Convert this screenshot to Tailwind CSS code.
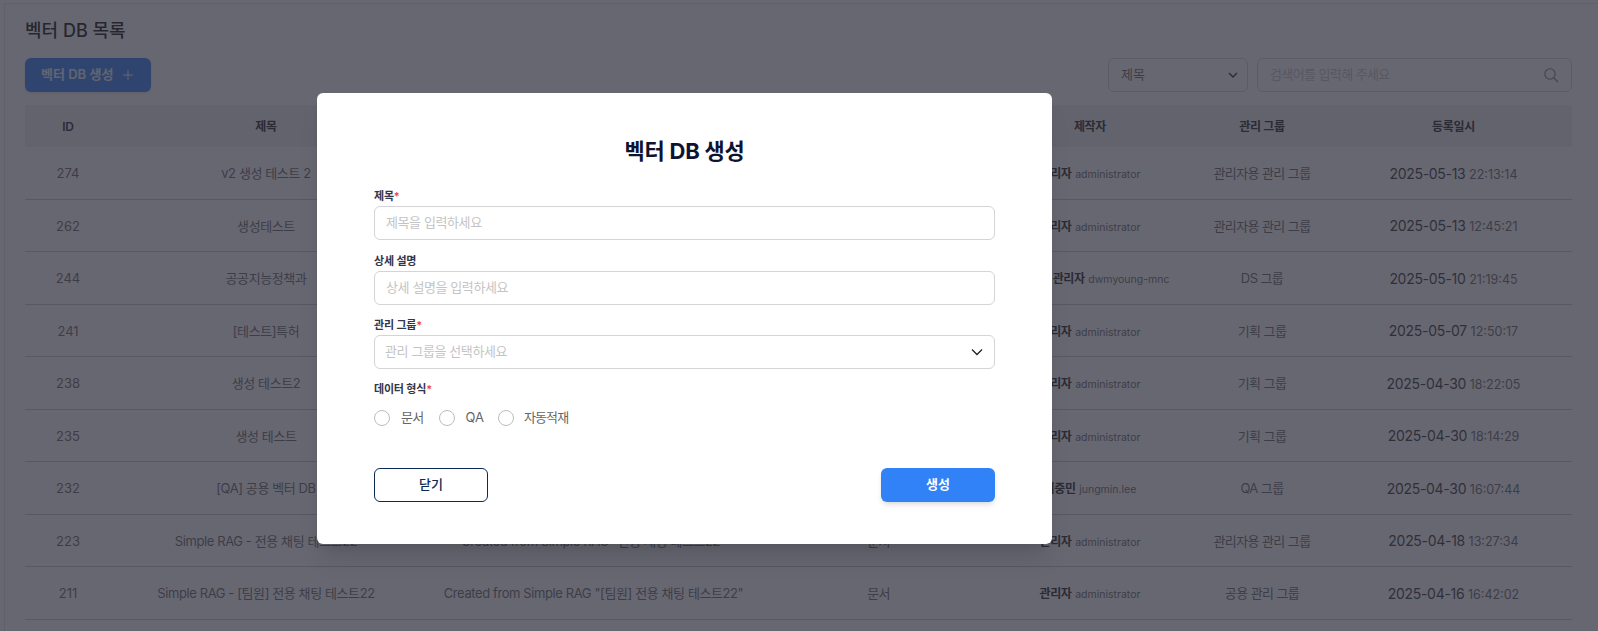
<!DOCTYPE html>
<html lang="ko">
<head>
  <meta charset="UTF-8" />
  <meta name="viewport" content="width=device-width, initial-scale=1.0" />
  <title>벡터 DB 목록</title>
  <script src="https://cdn.jsdelivr.net/npm/@tailwindcss/browser@4"></script>
</head>
<body class="bg-white text-[#1a1a2e] font-['Inter','Noto_Sans_CJK_KR',sans-serif] h-[631px] overflow-hidden">
  <div class="relative h-[631px] overflow-hidden">
    <!-- page behind the dialog -->
    <main class="ml-[4px] mt-[3px] h-[628px] border-l border-t border-[#e4e4ea] pl-[20px] pr-[26px] pt-[14px]">
      <h1 class="text-[18px] leading-[26px] font-medium text-[#111]">벡터 DB 목록</h1>

      <div class="flex items-center justify-between mt-[14px] h-[34px]">
        <button class="flex items-center gap-[9px] h-[34px] w-[126px] pl-4 rounded-md bg-[#3182f6] text-white/90 text-[13px] font-semibold shadow">
          벡터 DB 생성
          <svg class="w-[12px] h-[12px]" viewBox="0 0 12 12" fill="none" stroke="currentColor" stroke-width="1"><path d="M6 1v10M1 6h10" /></svg>
        </button>
        <div class="flex gap-[9px]">
          <div class="flex items-center justify-between w-[140px] h-[34px] pl-3 pr-[8px] border border-[#d4d4d8] rounded-md text-[13px] text-[#666]">
            제목
            <svg class="w-[12px] h-[12px] text-[#222]" viewBox="0 0 12 12" fill="none" stroke="currentColor" stroke-width="1.4"><path d="M2 4l4 4 4-4" /></svg>
          </div>
          <div class="flex items-center justify-between w-[315px] h-[34px] pl-3 pr-[12px] border border-[#d4d4d8] rounded-md text-[13px] tracking-[-0.6px] text-[#c4c4c4]">
            검색어를 입력해 주세요
            <svg class="w-[16px] h-[16px] text-[#777]" viewBox="0 0 16 16" fill="none" stroke="currentColor" stroke-width="1.1"><circle cx="7" cy="7" r="5.2" /><path d="M11 11l4 4" /></svg>
          </div>
        </div>
      </div>

      <div id="table" class="mt-[13px] w-[1547px]">
        <div class="grid grid-cols-[86px_310px_345px_225px_198px_146px_237px] items-center h-[42px] pt-[1px] bg-[#efeff1] text-[12px] tracking-[-0.3px] font-semibold text-[#222] text-center">
          <div>ID</div><div>제목</div><div>설명</div><div>데이터 형식</div><div>제작자</div><div>관리 그룹</div><div>등록일시</div>
        </div>
      </div>
    </main>

    <!-- overlay + dialog -->
    <div class="absolute inset-0 bg-[#2f2e3d]/73 pl-[317px] pt-[93px]">
      <div class="w-[735px] h-[451px] bg-white rounded-md shadow-xl px-[57px] pt-[42px]">
        <h2 class="text-[22px] leading-[32px] font-bold tracking-[-0.2px] text-center text-[#0f1332]">벡터 DB 생성</h2>

        <label class="block mt-[21px] text-[11px] leading-[16px] font-semibold tracking-[-0.2px] text-[#33364a]">제목<span class="text-[#f04452]">*</span></label>
        <div class="flex items-center h-[34px] mt-[2px] pl-[11px] border border-[#d4d4d8] rounded-md text-[13px] tracking-[-0.4px] text-[#c4c4c4]">제목을 입력하세요</div>

        <label class="block mt-[12.5px] text-[11px] leading-[16px] font-semibold tracking-[-0.2px] text-[#33364a]">상세 설명</label>
        <div class="flex items-center h-[34px] mt-[2px] pl-[11px] border border-[#d4d4d8] rounded-md text-[13px] tracking-[-0.4px] text-[#c4c4c4]">상세 설명을 입력하세요</div>

        <label class="block mt-[12.5px] text-[11px] leading-[16px] font-semibold tracking-[-0.2px] text-[#33364a]">관리 그룹<span class="text-[#f04452]">*</span></label>
        <div class="flex items-center justify-between h-[34px] mt-[2px] px-[10px] border border-[#d4d4d8] rounded-md text-[13px] tracking-[-0.4px] text-[#c4c4c4]">
          관리 그룹을 선택하세요
          <svg class="w-[14px] h-[14px] text-[#222]" viewBox="0 0 14 14" fill="none" stroke="currentColor" stroke-width="1.3"><path d="M2 4.5l5 5 5-5" /></svg>
        </div>

        <label class="block mt-[12px] text-[11px] leading-[16px] font-semibold tracking-[-0.2px] text-[#33364a]">데이터 형식<span class="text-[#f04452]">*</span></label>
        <div class="flex items-center mt-[11px] h-[20px] text-[13px] text-[#666]">
          <span class="w-[16px] h-[16px] rounded-full border border-[#bdbdbd]"></span><span class="ml-[11px] tracking-[-0.7px]">문서</span>
          <span class="ml-[15px] w-[16px] h-[16px] rounded-full border border-[#bdbdbd]"></span><span class="ml-[11px]">QA</span>
          <span class="ml-[14px] w-[16px] h-[16px] rounded-full border border-[#bdbdbd]"></span><span class="ml-[10px] tracking-[-0.9px]">자동적재</span>
        </div>

        <div class="flex justify-between mt-[39.5px]">
          <button class="w-[114px] h-[34px] rounded-md border border-[#0b2a55] bg-white text-[13px] font-medium text-[#0b2a55]">닫기</button>
          <button class="w-[114px] h-[34px] rounded-md bg-[#3182f6] text-[13px] font-semibold text-white shadow-md">생성</button>
        </div>
      </div>
    </div>
  </div>

  <script>
    const rows = [
      ['274', 'v2 생성 테스트 2', '', '문서', '관리자', 'administrator', '관리자용 관리 그룹', '2025-05-13', '22:13:14'],
      ['262', '생성테스트', '', '문서', '관리자', 'administrator', '관리자용 관리 그룹', '2025-05-13', '12:45:21'],
      ['244', '공공지능정책과', '', '문서', 'DS 그룹 관리자', 'dwmyoung-mnc', 'DS 그룹', '2025-05-10', '21:19:45'],
      ['241', '[테스트]특허', '', '문서', '관리자', 'administrator', '기획 그룹', '2025-05-07', '12:50:17'],
      ['238', '생성 테스트2', '', '문서', '관리자', 'administrator', '기획 그룹', '2025-04-30', '18:22:05'],
      ['235', '생성 테스트', '', '문서', '관리자', 'administrator', '기획 그룹', '2025-04-30', '18:14:29'],
      ['232', '[QA] 공용 벡터 DB', '', '문서', '이중민', 'jungmin.lee', 'QA 그룹', '2025-04-30', '16:07:44'],
      ['223', 'Simple RAG - 전용 채팅 테스트22', 'Created from Simple RAG "전용 채팅 테스트22"', '문서', '관리자', 'administrator', '관리자용 관리 그룹', '2025-04-18', '13:27:34'],
      ['211', 'Simple RAG - [팀원] 전용 채팅 테스트22', 'Created from Simple RAG "[팀원] 전용 채팅 테스트22"', '문서', '관리자', 'administrator', '공용 관리 그룹', '2025-04-16', '16:42:02'],
    ];
    const table = document.getElementById('table');
    rows.forEach(r => {
      const row = document.createElement('div');
      row.className = 'grid grid-cols-[86px_310px_345px_225px_198px_146px_237px] items-center h-[52.5px] pt-[2px] border-b border-[#c8c8d0] text-[13px] text-[#666] text-center';
      row.innerHTML = `
        <div>${r[0]}</div>
        <div class="whitespace-nowrap tracking-[-0.4px]">${r[1]}</div>
        <div class="whitespace-nowrap tracking-[-0.4px]">${r[2]}</div>
        <div class="tracking-[-0.6px]">${r[3]}</div>
        <div class="whitespace-nowrap"><b class="font-semibold text-[12px] tracking-[-0.4px] text-[#222]">${r[4]}</b> <span class="text-[10.5px]">${r[5]}</span></div>
        <div class="tracking-[-0.6px]">${r[6]}</div>
        <div class="whitespace-nowrap"><span class="text-[14px] tracking-[-0.3px] text-[#333]">${r[7]}</span> <span class="text-[12.5px]">${r[8]}</span></div>
      `;
      table.appendChild(row);
    });
  </script>
</body>
</html>
